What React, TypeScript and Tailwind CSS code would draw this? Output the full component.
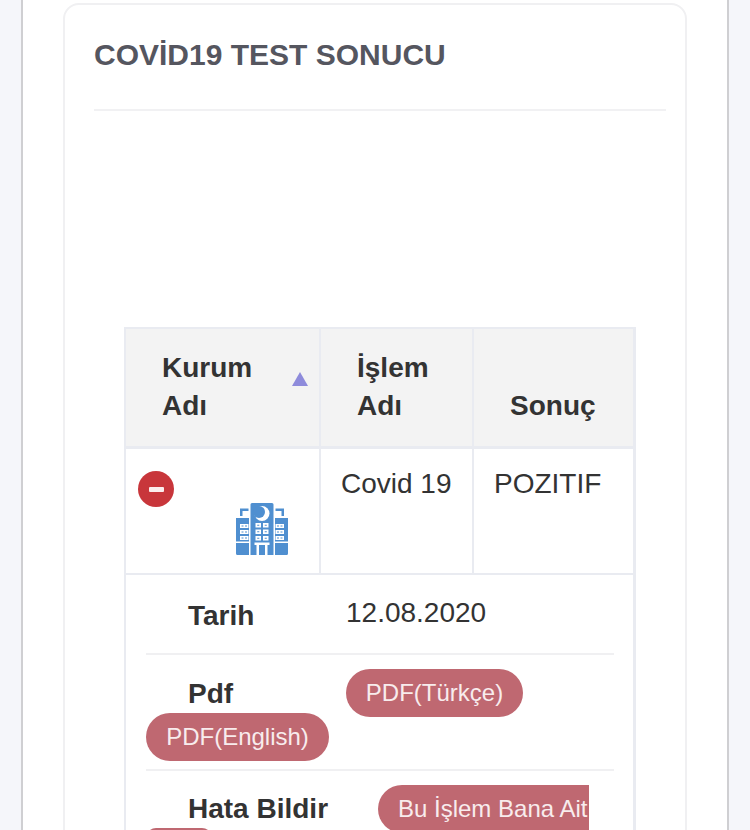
const font = "font-['Liberation_Sans',Arial,sans-serif]";

function HospitalIcon() {
  return (
    <svg width="52" height="52" viewBox="0 0 52 52" className="block">
      {/* wings, tower */}
      <path fill="#4f8fd0" d="M0 15h13v37H1.500A1.500 1.500 0 0 1 0 50.500zM39 15h13v35.500a1.500 1.500 0 0 1-1.500 1.500H39zM14.500 1.500A1.500 1.500 0 0 1 16 0h20a1.500 1.500 0 0 1 1.500 1.500V52h-23z" />
      {/* roof brackets */}
      <path fill="#4f8fd0" d="M4 13V5.500h8.500v2.500H6.500v5zM48 13V5.500h-8.500v2.500h6v5z" />
      {/* moon */}
      <circle cx="26" cy="10.500" r="7.500" fill="#fff" />
      <circle cx="23" cy="9" r="6" fill="#4f8fd0" />
      {/* tower windows */}
      <path fill="#fff" d="M19.500 20h5.500v4.500h-5.500zM27 20h5.500v4.500H27zM19.500 26.500h5.500V31h-5.500zM27 26.500h5.500V31H27zM19.500 33h5.500v4.500h-5.500zM27 33h5.500v4.500H27z" />
      <path fill="#4f8fd0" d="M21.200 21.700h2.100v1.100h-2.100zM28.700 21.700h2.100v1.100h-2.100zM21.200 28.200h2.100v1.100h-2.100zM28.700 28.200h2.100v1.100h-2.100zM21.200 34.700h2.100v1.100h-2.100zM28.700 34.700h2.100v1.100h-2.100z" />
      {/* wing windows */}
      <path fill="#fff" d="M4 21h8.500v4H4zM4 27h8.500v4H4zM4 33h8.500v4H4zM39.500 21H48v4h-8.500zM39.500 27H48v4h-8.500zM39.500 33H48v4h-8.500z" />
      <path fill="#4f8fd0" d="M5.500 22.500h2v1h-2zM9 22.500h2v1H9zM5.500 28.500h2v1h-2zM9 28.500h2v1H9zM5.500 34.500h2v1h-2zM9 34.500h2v1H9zM41 22.500h2v1h-2zM44.500 22.500h2v1h-2zM41 28.500h2v1h-2zM44.500 28.500h2v1h-2zM41 34.500h2v1h-2zM44.500 34.500h2v1h-2z" />
      {/* portico */}
      <path fill="#fff" d="M0 38.500h13V40H0zM39 38.500h13V40H39zM18.500 39.500h15V42h-15zM20.500 42h2.500v10h-2.500zM29 42h2.500v10H29z" />
    </svg>
  );
}

function Pill({ children, className }: { children: React.ReactNode; className?: string }) {
  return (
    <span className={`inline-block h-12 rounded-[24px] bg-[#bf6871] text-[24px] leading-[48px] text-[#f8eced] ${className ?? ""}`}>
      {children}
    </span>
  );
}

export default function App() {
  return (
    <div className={`${font} h-[830px] w-[750px] overflow-hidden bg-[#f5f6fa] px-[21px] text-[#333333]`}>
      <div className="h-full border-x-2 border-[#cfcfd2] bg-white px-[40px] pt-[3px]">
        <div className="h-[900px] rounded-t-2xl border-2 border-[#f0f0f2] pr-[19px] pl-[29px]">
          <h1 className="mt-[30px] h-[76px] border-b-2 border-[#f1f1f3] text-[30px] leading-[40px] font-bold text-[#55565f]">
            COVİD19 TEST SONUCU
          </h1>

          <div className="mt-[216px] ml-[30px] w-[512px] border-2 border-r-[3px] border-[#e9ebf1]">
            <div className="grid h-[120px] grid-cols-[195px_153px_1fr] border-b-[3px] border-[#e9ebf1] bg-[#f3f3f3] text-[28px] leading-[38px] font-bold">
              <div className="relative border-r-2 border-[#e9ebf1] pt-[20px] pl-[36px]">
                Kurum
                <br />
                Adı
                <span className="absolute top-[43px] left-[166px] h-0 w-0 border-x-[8px] border-b-[14px] border-x-transparent border-b-[#8e8bdb]" />
              </div>
              <div className="border-r-2 border-[#e9ebf1] pt-[20px] pl-[36px]">
                İşlem
                <br />
                Adı
              </div>
              <div className="pt-[58px] pl-[36px]">Sonuç</div>
            </div>

            <div className="grid h-[126px] grid-cols-[195px_153px_1fr] border-b-2 border-[#e9ebf1] text-[28px] leading-[38px]">
              <div className="flex flex-col border-r-2 border-[#e9ebf1] pt-[22px] pl-[12px]">
                <span className="flex h-[36px] w-[36px] items-center justify-center rounded-full bg-[#c8363b]">
                  <span className="h-[5px] w-[15px] rounded-[1px] bg-[#fbeeee]" />
                </span>
                <div className="mt-[-4px] ml-[98px]">
                  <HospitalIcon />
                </div>
              </div>
              <div className="border-r-2 border-[#e9ebf1] pt-[16px] pl-[20px]">Covid 19</div>
              <div className="pt-[16px] pl-[20px]">POZITIF</div>
            </div>

            <div className="h-[300px] pr-[19px] pl-[20px] text-[28px]">
              <div className="flex h-[80px] border-b-2 border-[#f0f0f2] pt-[21px] leading-[38px]">
                <span className="ml-[42px] w-[158px] pt-[1px] font-bold">Tarih</span>
                <span className="-mt-[2px]">12.08.2020</span>
              </div>
              <div className="h-[116px] border-b-2 border-[#f0f0f2] pt-[14px]">
                <div className="flex h-[44px]">
                  <span className="ml-[42px] w-[158px] pt-[6px] leading-[38px] font-bold">Pdf</span>
                  <Pill className="w-[177px] text-center">PDF(Türkçe)</Pill>
                </div>
                <Pill className="w-[183px] text-center">PDF(English)</Pill>
              </div>
              <div className="flex pt-[14px]">
                <span className="ml-[42px] w-[190px] pt-[5px] leading-[38px] font-bold whitespace-nowrap">Hata Bildir</span>
                <span className="h-12 w-[211px] rounded-l-[24px] bg-[#bf6871] pl-[20px] text-[24px] leading-[48px] whitespace-nowrap text-[#f8eced]">
                  Bu İşlem Bana Ait
                </span>
              </div>
              <div className="mt-[-5px] h-6 w-[66px] rounded-t-[10px] bg-[#bf6871]" />
            </div>
          </div>
        </div>
      </div>
    </div>
  );
}
